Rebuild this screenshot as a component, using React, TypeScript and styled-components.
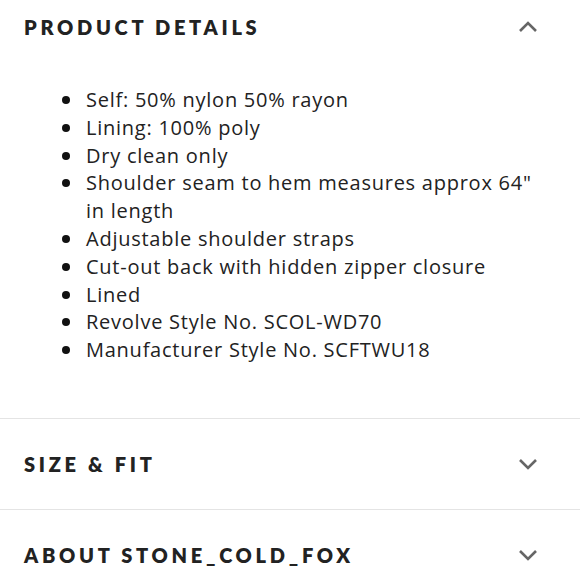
import React from "react";
import styled, { createGlobalStyle } from "styled-components";

const GlobalStyle = createGlobalStyle`
  body {
    margin: 0;
    background: #ffffff;
    font-family: "Open Sans", Lato, sans-serif;
  }
`;

interface IHeaderStyle {
  first?: boolean;
}

const Page = styled.div`
  width: 580px;
  height: 580px;
  overflow: hidden;
  background: #ffffff;
`;

const Section = styled.section<IHeaderStyle>`
  border-top: ${(props) => (props.first ? "none" : "1px solid #e4e4e4")};
`;

const Header = styled.div<IHeaderStyle>`
  display: flex;
  align-items: center;
  justify-content: space-between;
  height: ${(props) => (props.first ? "54px" : "90px")};
  padding: 0 42px 0 24px;
`;

const Title = styled.h2`
  margin: 0;
  color: #222222;
  font-family: Lato, "Liberation Sans", sans-serif;
  font-size: 20px;
  font-weight: 800;
  letter-spacing: 3.7px;
`;

const Content = styled.div`
  padding: 32px 36px 54px 86px;
`;

const List = styled.ul`
  margin: 0;
  padding: 0;
  list-style: none;
  color: #222222;
  font-family: "Open Sans", Lato, sans-serif;
  font-size: 20px;
  line-height: 27.8px;
  letter-spacing: 0.75px;
`;

const Item = styled.li`
  position: relative;

  &::before {
    content: "";
    position: absolute;
    left: -24px;
    top: 10px;
    width: 8px;
    height: 8px;
    border-radius: 50%;
    background: #111111;
  }
`;

const Chevron: React.FC<{ up?: boolean }> = ({ up }) => (
  <svg width="20" height="12" viewBox="0 0 20 12">
    <path
      d={up ? "M2 10 L10 2 L18 10" : "M2 2 L10 10 L18 2"}
      fill="none"
      stroke="#666666"
      strokeWidth="2.6"
    />
  </svg>
);

const details = [
  "Self: 50% nylon 50% rayon",
  "Lining: 100% poly",
  "Dry clean only",
  'Shoulder seam to hem measures approx 64" in length',
  "Adjustable shoulder straps",
  "Cut-out back with hidden zipper closure",
  "Lined",
  "Revolve Style No. SCOL-WD70",
  "Manufacturer Style No. SCFTWU18",
];

const App: React.FC = () => {
  return (
    <Page>
      <GlobalStyle />
      <Section first>
        <Header first>
          <Title>PRODUCT DETAILS</Title>
          <Chevron up />
        </Header>
        <Content>
          <List>
            {details.map((d) => (
              <Item key={d}>{d}</Item>
            ))}
          </List>
        </Content>
      </Section>
      <Section>
        <Header>
          <Title>SIZE &amp; FIT</Title>
          <Chevron />
        </Header>
      </Section>
      <Section>
        <Header>
          <Title>ABOUT STONE_COLD_FOX</Title>
          <Chevron />
        </Header>
      </Section>
    </Page>
  );
};

export default App;
